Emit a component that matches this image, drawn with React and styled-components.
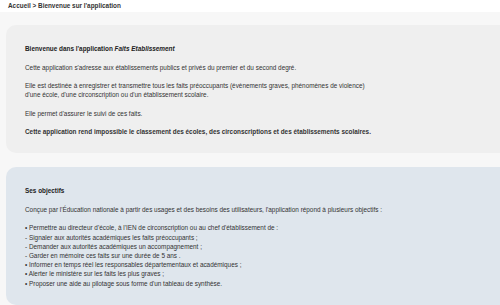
import React from "react";
import styled, { createGlobalStyle } from "styled-components";

const Global = createGlobalStyle`
  html, body {
    margin: 0;
    padding: 0;
    background: #f7f7f7;
    overflow: hidden;
  }
  body {
    font-family: "Liberation Sans", Arial, sans-serif;
    color: #333;
  }
`;

const Header = styled.header`
  background: #ffffff;
  height: 12px;
  padding-left: 8px;
  display: flex;
  align-items: center;
`;

const Breadcrumb = styled.nav`
  font-size: 6.4px;
  font-weight: bold;
  color: #333;
  line-height: 12px;
`;

const Main = styled.main`
  display: flex;
  flex-direction: column;
  gap: 14px;
  padding: 13px 0 0 6px;
`;

const Card = styled.section`
  background: ${(p) => p.$bg};
  border-radius: 10px 0 0 10px;
  padding: 19px 10px 17px 19px;
`;

const Para = styled.p`
  margin: 0 0 9.3px 0;
  font-size: 6.4px;
  line-height: 9.2px;
  color: #333;
  white-space: nowrap;
  font-weight: ${(p) => (p.$bold ? "bold" : "normal")};
  &:last-child {
    margin-bottom: 0;
  }
`;

const Title = styled(Para)`
  font-weight: bold;
  color: #222;
`;

const List = styled.ul`
  list-style: none;
  margin: 0;
  padding: 0;
  font-size: 6.4px;
  line-height: 9.2px;
  color: #333;
`;

const Item = styled.li``;

const objectifs = [
  "• Permettre au directeur d'école, à l'IEN de circonscription ou au chef d'établissement de :",
  "- Signaler aux autorités académiques les faits préoccupants ;",
  "- Demander aux autorités académiques un accompagnement ;",
  "- Garder en mémoire ces faits sur une durée de 5 ans .",
  "• Informer en temps réel les responsables départementaux et académiques ;",
  "• Alerter le ministère sur les faits les plus graves ;",
  "• Proposer une aide au pilotage sous forme d'un tableau de synthèse.",
];

export default function App() {
  return (
    <>
      <Global />
      <Header>
        <Breadcrumb>Accueil &gt; Bienvenue sur l'application</Breadcrumb>
      </Header>
      <Main>
        <Card $bg="#efefef">
          <Title>
            Bienvenue dans l'application <em>Faits Etablissement</em>
          </Title>
          <Para>
            Cette application s'adresse aux établissements publics et privés du premier et du second degré.
          </Para>
          <Para>
            Elle est destinée à enregistrer et transmettre tous les faits préoccupants (évènements graves, phénomènes de violence)
            <br />
            d'une école, d'une circonscription ou d'un établissement scolaire.
          </Para>
          <Para>Elle permet d'assurer le suivi de ces faits.</Para>
          <Para $bold>
            Cette application rend impossible le classement des écoles, des circonscriptions et des établissements scolaires.
          </Para>
        </Card>
        <Card $bg="#dfe6ed">
          <Title>Ses objectifs</Title>
          <Para>
            Conçue par l'Éducation nationale à partir des usages et des besoins des utilisateurs, l'application répond à plusieurs objectifs :
          </Para>
          <List>
            {objectifs.map((o) => (
              <Item key={o}>{o}</Item>
            ))}
          </List>
        </Card>
      </Main>
    </>
  );
}
